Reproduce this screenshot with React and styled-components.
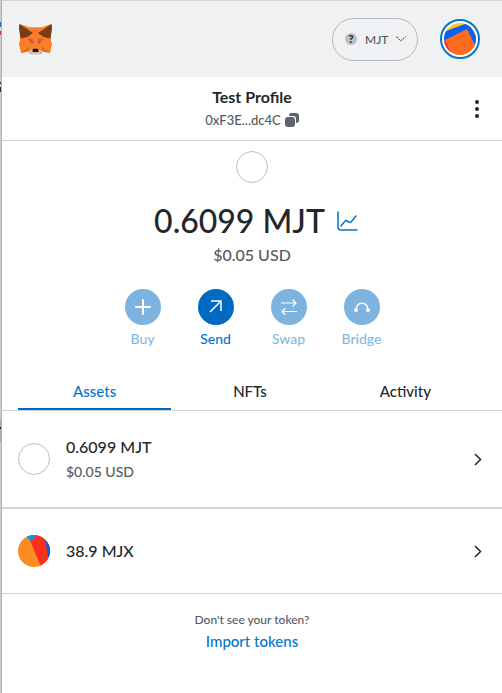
import React from "react";
import styled, { createGlobalStyle } from "styled-components";

const GlobalStyle = createGlobalStyle`
  * {
    box-sizing: border-box;
  }
  body {
    margin: 0;
    background: #fff;
    color: #24272a;
    font-family: Lato, "Liberation Sans", sans-serif;
    font-weight: 500;
  }
  button {
    margin: 0;
    padding: 0;
    border: none;
    background: none;
    color: inherit;
    font: inherit;
    cursor: pointer;
  }
  svg {
    display: block;
  }
`;

const Page = styled.div`
  display: flex;
  min-height: 100vh;
`;

/* sliver of the page behind the popup */
const Backdrop = styled.div`
  width: 2px;
  border-right: 1px solid #b0b0b0;
  background: linear-gradient(
    #ccc 22px,
    #2a5fc4 22px 27px,
    #ddd 27px 31px,
    #d3343a 31px 35px,
    #ccc 35px 82px,
    #333 82px 84px,
    #ccc 84px 87px,
    #333 87px 92px,
    #ccc 92px 419px,
    #aaaabc 419px 427px,
    #222 427px 429px,
    #aaaabc 429px 442px,
    #ccc 442px
  );
`;

const Popup = styled.main`
  flex: 1;
  border-top: 1px solid #d2d6d9;
`;

const Header = styled.header`
  display: flex;
  align-items: center;
  height: 76px;
  padding: 0 22px 0 17px;
  background: #f0f1f3;
`;

const NetworkButton = styled.button`
  display: flex;
  align-items: center;
  gap: 8px;
  width: 86px;
  height: 43px;
  margin: 0 22px 0 auto;
  padding: 0 8px 0 12px;
  border: 1px solid #b3b8be;
  border-radius: 22px;
  color: #535a61;
  font-size: 12px;
`;

const NetworkIcon = styled.span`
  width: 12px;
  height: 12px;
  border-radius: 50%;
  background: #bbc0c5;
  color: #24272a;
  font-size: 11px;
  font-weight: 900;
  line-height: 12px;
  text-align: center;
`;

const AccountButton = styled.button`
  width: 40px;
  height: 40px;
  padding: 2px;
  border: 2px solid #0376c9;
  border-radius: 50%;
  background: #fff;
`;

const AccountBar = styled.section`
  display: grid;
  grid-template-columns: 1fr auto 1fr;
  align-items: center;
  height: 64px;
  padding: 0 16px;
  border-bottom: 1px solid #d0d3d6;
`;

const Account = styled.button`
  grid-column: 2;
`;

const AccountName = styled.div`
  font-size: 16px;
  font-weight: 700;
  line-height: 22px;
`;

const Address = styled.div`
  display: flex;
  align-items: center;
  justify-content: center;
  gap: 4px;
  color: #535a61;
  font-size: 13px;
  line-height: 24px;
`;

const MenuButton = styled.button`
  justify-self: end;
  width: 18px;
`;

const Overview = styled.section`
  display: flex;
  flex-direction: column;
  align-items: center;
  padding-top: 10px;
`;

const TokenCircle = styled.span`
  flex: none;
  width: 32px;
  height: 32px;
  border: 1px solid #bbc0c5;
  border-radius: 50%;
`;

const Balance = styled.div`
  display: flex;
  align-items: center;
  gap: 12px;
  margin-top: 16px;
  padding-left: 8px;
  font-size: 32px;
  line-height: 44px;
`;

const Fiat = styled.div`
  color: #535a61;
  font-size: ${({ $size }) => $size};
  line-height: 24px;
`;

const Actions = styled.div`
  display: flex;
  gap: 5px;
  margin-top: 22px;
`;

const Action = styled.button`
  display: flex;
  flex-direction: column;
  align-items: center;
  gap: 4px;
  width: 68px;
  color: #0376c9;
  font-size: 14px;
  line-height: 20px;
  opacity: ${({ disabled }) => (disabled ? 0.5 : 1)};
`;

const ActionIcon = styled.span`
  display: grid;
  place-items: center;
  width: 36px;
  height: 36px;
  border-radius: 50%;
  background: #0069c2;
`;

const Tabs = styled.div`
  display: grid;
  grid-template-columns: repeat(3, 1fr);
  gap: 2px;
  margin-top: 22px;
  padding: 0 20px 0 16px;
  border-bottom: 1px solid #d0d3d6;
`;

const Tab = styled.button`
  height: 39px;
  padding-top: 2px;
  border-bottom: 2px solid ${({ $active }) => ($active ? "#0069c2" : "transparent")};
  color: ${({ $active }) => ($active ? "#0376c9" : "#24272a")};
  font-size: 15px;
  line-height: 20px;
`;

const Asset = styled.button`
  display: flex;
  align-items: center;
  gap: 16px;
  width: 100%;
  height: ${({ $tall }) => ($tall ? "98px" : "85px")};
  padding: 0 20px 0 16px;
  border-bottom: ${({ $tall }) => ($tall ? "2px" : "1px")} solid #d0d4d9;
  text-align: left;
`;

const AssetText = styled.div`
  flex: 1;
`;

const AssetAmount = styled.div`
  font-size: 16px;
  line-height: 26px;
`;

const Footer = styled.footer`
  display: flex;
  flex-direction: column;
  align-items: center;
  padding-top: 16px;
  color: #535a61;
  font-size: 12px;
  line-height: 20px;
`;

const ImportLink = styled.a`
  color: #0376c9;
  font-size: 15px;
  line-height: 22px;
  text-decoration: none;
`;

const Fox = () => (
  <svg width="33" height="31" viewBox="0 0 33 31" aria-label="MetaMask">
    <path fill="#f5841f" d="M0.500 0 11 3.500h11L32.500 0 33 3 31.500 14l1.300 7-1.800 8-7.500-2.300-1.500 3.300H11l-1.500-3.300L2 29 .2 21l1.300-7L0 3Z" />
    <path fill="#ff7a2b" d="m11 3.500 1 9-10.500 2L.2 21l10.300.5 3 4h6l3-4 10.300-.5-1.300-6.500-10.500-2 1-9Z" />
    <path fill="#763d16" d="M0.500 0 14 9 8.500 13 1.500 14.500 0 4ZM32.500 0 19 9l5.500 4 7 1.500L33 4Z" />
    <path fill="#e2571f" d="m8 15 5.500-.5 1 5-3-2ZM25 15l-5.500-.5-1 5 3-2Z" />
    <path fill="#e8672a" d="m2 29 8-6.500.5 4.500-1 .5ZM31 29l-8-6.500-.5 4.500 1 .5Z" />
    <path fill="#5f6470" d="m10.500 18 3-.8.5 2.300ZM22.500 18l-3-.8-.5 2.300Z" />
    <path fill="#d9bfae" d="m10 27 3-1.500h7l3 1.500-3 3.500h-7Z" />
    <path fill="#161616" d="m13.700 25.500.5-.7h4.600l.5.700.2 2.500h-6Z" />
  </svg>
);

const AccountAvatar = () => (
  <svg width="32" height="32" viewBox="0 0 32 32">
    <defs>
      <clipPath id="account">
        <circle cx="16" cy="16" r="16" />
      </clipPath>
    </defs>
    <g clipPath="url(#account)">
      <path fill="#f9c82f" d="M0 0h32v32H0Z" />
      <path fill="#f5293c" d="m0 14 8 4v14H0Z" />
      <path fill="#0a5ff0" d="M-1 9 21 1q4-1 6 3l8 14-6 6L2 17l-3 1Z" />
      <path fill="#ff6b21" d="m1 17 22-11 9 18-6 12H10Z" />
    </g>
  </svg>
);

const TokenAvatar = () => (
  <svg width="32" height="32" viewBox="0 0 32 32">
    <defs>
      <clipPath id="token">
        <circle cx="16" cy="16" r="16" />
      </clipPath>
    </defs>
    <g clipPath="url(#token)">
      <path fill="#fa8b25" d="M0 0h32v32H0Z" />
      <path fill="#fc311d" d="M12 0h20v32h-9L11 3Z" />
      <path fill="#0a5fdd" d="M27 3h5v19h-2Z" />
      <path fill="#1593e5" d="m7 1 12-1-6 6Z" />
    </g>
  </svg>
);

const CopyIcon = () => (
  <svg width="14" height="14" viewBox="0 0 14 14" fill="#5c656e">
    <path d="M6 0h5q3 0 3 3v4q0 3-3 3V6q0-3-3-3H4Q4 0 6 0Z" />
    <rect y="4" width="10" height="10" rx="3" />
  </svg>
);

const ChartIcon = () => (
  <svg width="21" height="20" viewBox="0 0 21 20" fill="none" stroke="#0376c9" strokeWidth="1.500" strokeLinecap="round" strokeLinejoin="round">
    <path d="M1 1v15q0 3 3 3h16M4 15l4-5q1-1 2 0l2 1q1 1 2 0l5-6" />
  </svg>
);

const ChevronDown = () => (
  <svg width="10" height="6" viewBox="0 0 10 6" fill="none" stroke="#24272a">
    <path strokeDasharray="2 1" d="m.5.500 4 4.500 5-4.500" />
  </svg>
);

const ChevronRight = () => (
  <svg width="8" height="13" viewBox="0 0 8 13" fill="none" stroke="#24272a" strokeWidth="1.500">
    <path d="m1 1 5.500 5.500L1 12" />
  </svg>
);

const MoreIcon = () => (
  <svg width="18" height="18" viewBox="0 0 18 18" fill="#24272a">
    <circle cx="9" cy="2" r="2" />
    <circle cx="9" cy="9" r="2" />
    <circle cx="9" cy="16" r="2" />
  </svg>
);

const BuyIcon = () => (
  <svg width="18" height="18" viewBox="0 0 18 18" stroke="#fff" strokeWidth="2" strokeLinecap="round">
    <path d="M9 2v14M2 9h14" />
  </svg>
);

const SendIcon = () => (
  <svg width="18" height="18" viewBox="0 0 18 18" fill="none" stroke="#fff" strokeWidth="1.500">
    <path d="M4 3h10v10M14 3 3 14" />
  </svg>
);

const SwapIcon = () => (
  <svg width="18" height="18" viewBox="0 0 18 18" fill="none" stroke="#fff" strokeWidth="1.200" strokeLinecap="round" strokeLinejoin="round">
    <path d="M1.500 5H16M13 2l3 3-3 3M16.500 13.500H2M5 10.500l-3 3 3 3" />
  </svg>
);

const BridgeIcon = () => (
  <svg width="18" height="18" viewBox="0 0 18 18" fill="none" stroke="#fff" strokeWidth="1.500">
    <path d="M3 11.500C4 3 14 3 15 11.500" />
    <circle cx="3" cy="12" r="1.300" fill="#fff" />
    <circle cx="15" cy="12" r="1.300" fill="#fff" />
  </svg>
);

const actions = [
  { label: "Buy", icon: <BuyIcon />, disabled: true },
  { label: "Send", icon: <SendIcon /> },
  { label: "Swap", icon: <SwapIcon />, disabled: true },
  { label: "Bridge", icon: <BridgeIcon />, disabled: true },
];

const tabs = ["Assets", "NFTs", "Activity"];

const App = () => {
  return (
    <Page>
      <GlobalStyle />
      <Backdrop />
      <Popup>
        <Header>
          <Fox />
          <NetworkButton>
            <NetworkIcon>?</NetworkIcon>
            MJT
            <ChevronDown />
          </NetworkButton>
          <AccountButton aria-label="Account">
            <AccountAvatar />
          </AccountButton>
        </Header>
        <AccountBar>
          <Account>
            <AccountName>Test Profile</AccountName>
            <Address>
              0xF3E...dc4C
              <CopyIcon />
            </Address>
          </Account>
          <MenuButton aria-label="Options">
            <MoreIcon />
          </MenuButton>
        </AccountBar>
        <Overview>
          <TokenCircle />
          <Balance>
            0.6099 MJT
            <ChartIcon />
          </Balance>
          <Fiat $size="16px">$0.05 USD</Fiat>
          <Actions>
            {actions.map(({ label, icon, disabled }) => (
              <Action key={label} disabled={disabled}>
                <ActionIcon>{icon}</ActionIcon>
                {label}
              </Action>
            ))}
          </Actions>
        </Overview>
        <Tabs role="tablist">
          {tabs.map((tab) => (
            <Tab key={tab} role="tab" $active={tab === "Assets"}>
              {tab}
            </Tab>
          ))}
        </Tabs>
        <Asset $tall>
          <TokenCircle />
          <AssetText>
            <AssetAmount>0.6099 MJT</AssetAmount>
            <Fiat $size="14px">$0.05 USD</Fiat>
          </AssetText>
          <ChevronRight />
        </Asset>
        <Asset>
          <TokenAvatar />
          <AssetText>
            <AssetAmount>38.9 MJX</AssetAmount>
          </AssetText>
          <ChevronRight />
        </Asset>
        <Footer>
          Don't see your token?
          <ImportLink href="#">Import tokens</ImportLink>
        </Footer>
      </Popup>
    </Page>
  );
};

export default App;
